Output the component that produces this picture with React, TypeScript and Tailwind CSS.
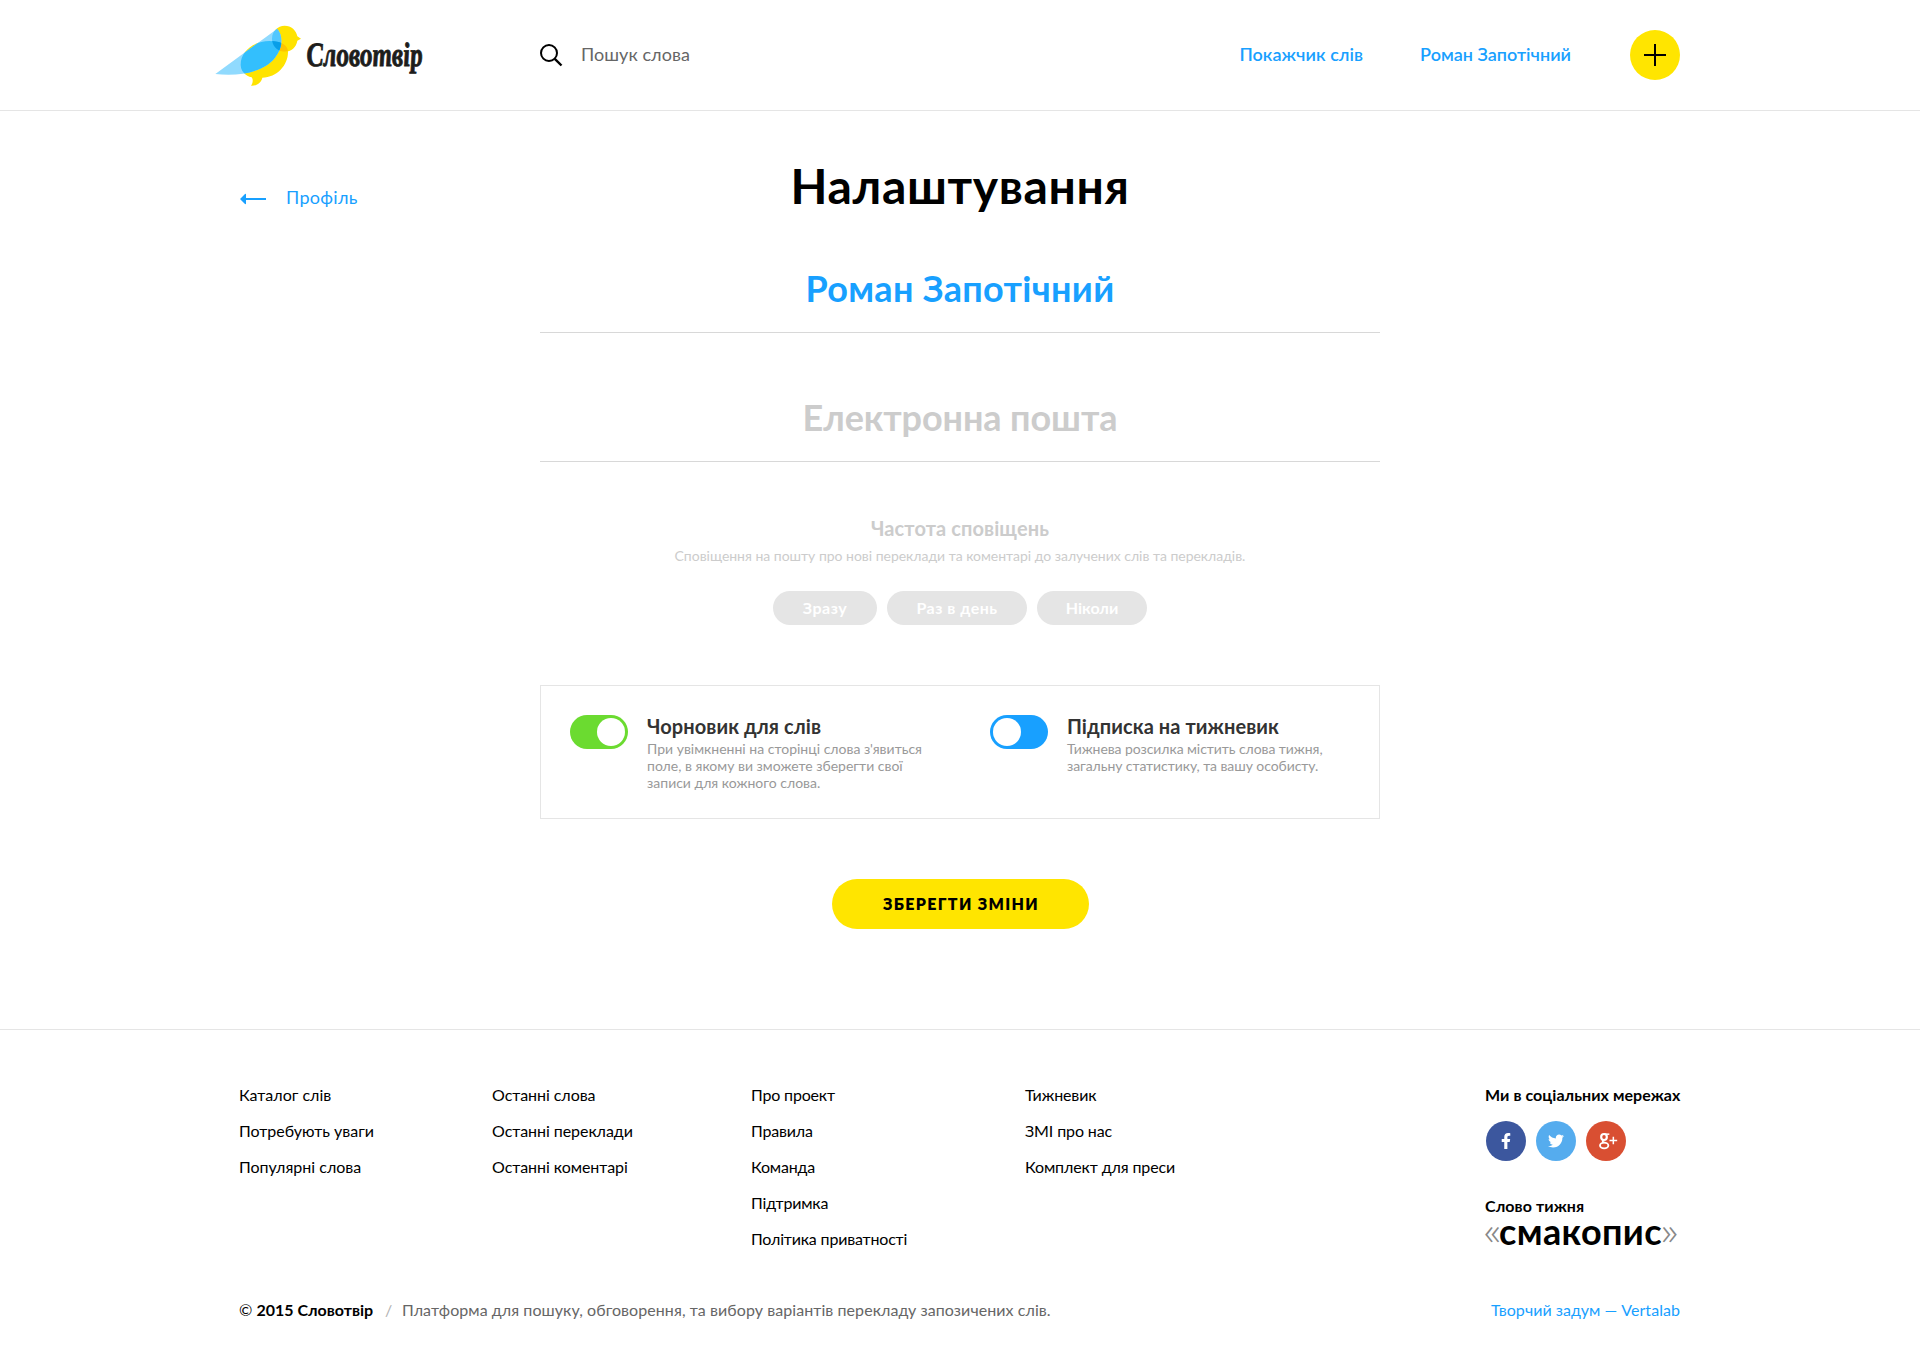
import type { ReactNode } from "react";
import { FaFacebookF, FaTwitter } from "react-icons/fa";

const WING = "M46 192 L232 56 C250 78 249 113 225 143 C193 184 122 201 46 192 Z";
const BODY =
  "M122 165 C122 119 166 93 208 93 C242 93 264 104 264 126 C264 166 231 202 187 203 C184 217 172 228 153 227 C160 217 159 207 155 202 C137 198 122 184 122 165 Z";
const HEAD =
  "M254 47 C274 47 289 61 292 79 L303 86 L292 92 C289 111 274 125 254 125 C233 125 216 108 216 86 C216 64 233 47 254 47 Z";

function Logo() {
  return (
    <a href="#" className="flex w-[325px] shrink-0 items-start" aria-label="Словотвір">
      <svg className="h-[62px] w-[86px]" viewBox="45 45 258 186">
        <defs>
          <clipPath id="wing"><path d={WING} /></clipPath>
          <clipPath id="head"><path d={HEAD} /></clipPath>
        </defs>
        <path d={HEAD} fill="#ffe300" />
        <path d={BODY} fill="#ffe300" />
        <path d={BODY} fill="#fdc500" clipPath="url(#head)" />
        <path d={WING} fill="#90dafe" />
        <g clipPath="url(#wing)">
          <path d={HEAD} fill="#52c7fe" />
          <path d={BODY} fill="#33bffd" />
          <path d={BODY} fill="#089ee8" clipPath="url(#head)" />
        </g>
      </svg>
      <svg className="mt-2 ml-1.5 h-[44px] w-[120px] overflow-visible" viewBox="0 0 120 44">
        <text
          x="0"
          y="33"
          textLength="116"
          lengthAdjust="spacingAndGlyphs"
          transform="translate(-2 0) skewX(4)"
          fill="#1d1d1b"
          stroke="#1d1d1b"
          strokeWidth="0.9"
          className="font-['Liberation_Serif',serif] text-[34px] font-bold italic"
        >
          Словотвір
        </text>
      </svg>
    </a>
  );
}

function Toggle({ on, title, children }: { on?: boolean; title: string; children: ReactNode }) {
  return (
    <div className="flex w-[420px] shrink-0 pl-[29px]">
      <span
        className={
          on
            ? "mt-[29px] flex h-[34px] w-[58px] shrink-0 items-center justify-end rounded-full bg-[#6bdb30] p-[3px]"
            : "mt-[29px] flex h-[34px] w-[58px] shrink-0 items-center rounded-full bg-[#18a0ff] p-[3px]"
        }
      >
        <span className="size-7 rounded-full bg-white" />
      </span>
      <div className="mt-7 ml-[19px] whitespace-nowrap">
        <h3 className="text-xl leading-6 font-bold tracking-[0.08px] text-[#333]">{title}</h3>
        <p className="mt-0.5 text-sm leading-[17px] text-[#999]">{children}</p>
      </div>
    </div>
  );
}

const COLUMNS = [
  { items: ["Каталог слів", "Потребують уваги", "Популярні слова"], tracking: "tracking-normal" },
  { items: ["Останні слова", "Останні переклади", "Останні коментарі"], tracking: "tracking-[-0.06px]" },
  { items: ["Про проект", "Правила", "Команда", "Підтримка", "Політика приватності"], tracking: "tracking-[-0.18px]" },
  { items: ["Тижневик", "ЗМІ про нас", "Комплект для преси"], tracking: "tracking-[-0.12px]" },
];

export default function App() {
  return (
    <div className="h-[1356px] overflow-hidden bg-white font-[Lato,sans-serif] text-black">
      <header className="flex h-[111px] justify-center border-b border-[#e5e5e5]">
        <div className="flex w-[1490px] pt-[25px] pr-[25px]">
          <Logo />
          <div className="flex h-[58px] grow items-center">
            <svg className="mt-1 size-6" viewBox="0 0 24 24" fill="none" stroke="#000" strokeWidth="2">
              <circle cx="9" cy="9" r="8" />
              <path d="M14.8 14.8 L21.5 21.5" strokeWidth="2.4" />
            </svg>
            <span className="ml-[17px] text-lg tracking-[0.05px] text-[#666]">Пошук слова</span>
          </div>
          <nav className="flex h-[58px] items-center text-lg font-semibold text-[#18a0ff]">
            <a href="#" className="tracking-[0.05px]">Покажчик слів</a>
            <a href="#" className="ml-[57px]">Роман Запотічний</a>
          </nav>
          <button className="mt-[5px] ml-[59px] flex size-[50px] items-center justify-center rounded-full bg-[#ffe500]">
            <svg className="size-[22px]" viewBox="0 0 22 22" stroke="#000" strokeWidth="2">
              <path d="M11 0 V22 M0 11 H22" />
            </svg>
          </button>
        </div>
      </header>

      <main className="mx-auto w-[1440px]">
        <div className="grid grid-cols-[300px_840px_300px] items-start pt-11">
          <a href="#" className="mt-7 flex items-center text-lg text-[#18a0ff]">
            <svg className="mt-1 h-3 w-[27px]" viewBox="0 0 27 12" fill="#18a0ff">
              <path d="M0 6 L5 1 Q6 0.5 6 1.5 V5 H26 V7 H6 V10.5 Q6 11.5 5 11 Z" />
            </svg>
            <span className="ml-[19px] tracking-[0.3px]">Профіль</span>
          </a>
          <h1 className="text-center text-5xl leading-[61px] font-bold tracking-[0.65px]">Налаштування</h1>
        </div>

        <div className="mx-auto w-[840px] text-center">
          <h2 className="mt-[50px] border-b border-[#d8d8d8] pb-[22px] text-4xl leading-[44px] font-bold tracking-[0.3px] text-[#18a0ff]">
            Роман Запотічний
          </h2>
          <h2 className="mt-[62px] border-b border-[#d8d8d8] pb-[22px] text-4xl leading-[44px] font-bold tracking-[-0.1px] text-[#ccc]">
            Електронна пошта
          </h2>
          <h3 className="mt-[54px] text-xl leading-6 font-bold tracking-[0.1px] text-[#ccc]">Частота сповіщень</h3>
          <p className="mt-1.5 text-sm leading-5 tracking-[-0.02px] text-[#ccc]">
            Сповіщення на пошту про нові переклади та коментарі до залучених слів та перекладів.
          </p>
          <div className="mt-[25px] flex justify-center gap-2.5 text-base font-bold tracking-[0.5px] text-white">
            <span className="flex h-[34px] w-[104px] items-center justify-center rounded-full bg-[#e5e5e5]">Зразу</span>
            <span className="flex h-[34px] w-[140px] items-center justify-center rounded-full bg-[#e5e5e5]">Раз в день</span>
            <span className="flex h-[34px] w-[110px] items-center justify-center rounded-full bg-[#e5e5e5] tracking-normal">Ніколи</span>
          </div>

          <div className="mt-[60px] flex h-[134px] border border-[#e5e5e5] text-left">
            <Toggle on title="Чорновик для слів">
              При увімкненні на сторінці слова з'явиться
              <br />
              поле, в якому ви зможете зберегти свої
              <br />
              записи для кожного слова.
            </Toggle>
            <Toggle title="Підписка на тижневик">
              <span className="tracking-[-0.07px]">
                Тижнева розсилка містить слова тижня,
                <br />
                загальну статистику, та вашу особисту.
              </span>
            </Toggle>
          </div>

          <button className="mt-[60px] ml-px h-[50px] w-[257px] rounded-full bg-[#ffe500] pl-px text-base font-extrabold tracking-[1.35px]">
            ЗБЕРЕГТИ ЗМІНИ
          </button>
        </div>
      </main>

      <footer className="mt-[100px] border-t border-[#e5e5e5] pt-[47px]">
        <div className="mx-auto w-[1442px] pr-px">
          <div className="flex h-[180px] justify-between">
            <div className="grid grid-cols-[253px_259px_274px_200px] text-base leading-9">
              {COLUMNS.map(({ items, tracking }) => (
                <ul key={items[0]} className={tracking}>
                  {items.map((item) => (
                    <li key={item}>{item}</li>
                  ))}
                </ul>
              ))}
            </div>
            <div className="w-[195px] whitespace-nowrap">
              <h4 className="text-base leading-9 font-bold tracking-[0.06px]">Ми в соціальних мережах</h4>
              <div className="mt-2 ml-px flex gap-2.5 text-white">
                <a href="#" aria-label="Facebook" className="flex size-10 items-center justify-center rounded-full bg-[#3c579e]">
                  <FaFacebookF className="size-4" />
                </a>
                <a href="#" aria-label="Twitter" className="flex size-10 items-center justify-center rounded-full bg-[#55acee]">
                  <FaTwitter className="size-4" />
                </a>
                <a href="#" aria-label="Google+" className="size-10 rounded-full bg-[#d94f32]">
                  <svg className="size-10" viewBox="0 0 120 120" fill="none" stroke="#fff">
                    <ellipse cx="54" cy="48" rx="8.5" ry="9" strokeWidth="6.5" />
                    <path d="M54 39.5 H70" strokeWidth="4.5" />
                    <path d="M52 56 C47 60 51 63 56 65" strokeWidth="5" />
                    <ellipse cx="54.5" cy="73.5" rx="12.5" ry="8.5" strokeWidth="5.5" />
                    <path d="M82 47 V70 M70.5 58.5 H93.5" strokeWidth="4.5" />
                  </svg>
                </a>
              </div>
              <h4 className="mt-[35px] text-base leading-5 font-bold tracking-[0.08px]">Слово тижня</h4>
              <p className="-mt-1.5 flex items-baseline text-4xl leading-10 font-bold">
                <span className="w-[14px] origin-left scale-x-125 -indent-[2px] text-[40px] font-light text-[#888]">«</span>
                <span className="tracking-[0.4px]">смакопис</span>
                <span className="w-[17px] origin-left scale-x-125 -indent-[2px] text-[40px] font-light text-[#888]">»</span>
              </p>
            </div>
          </div>
          <div className="mt-[43px] flex text-base leading-5 whitespace-nowrap">
            <span className="w-[146px]">© <b className="font-bold">2015 Словотвір</b></span>
            <span className="w-[17px] text-[#b2b2b2]">/</span>
            <span className="tracking-[0.07px] text-[#666]">
              Платформа для пошуку, обговорення, та вибору варіантів перекладу запозичених слів.
            </span>
            <a href="#" className="ml-auto tracking-[0.05px] text-[#18a0ff]">Творчий задум — Vertalab</a>
          </div>
        </div>
      </footer>
    </div>
  );
}
